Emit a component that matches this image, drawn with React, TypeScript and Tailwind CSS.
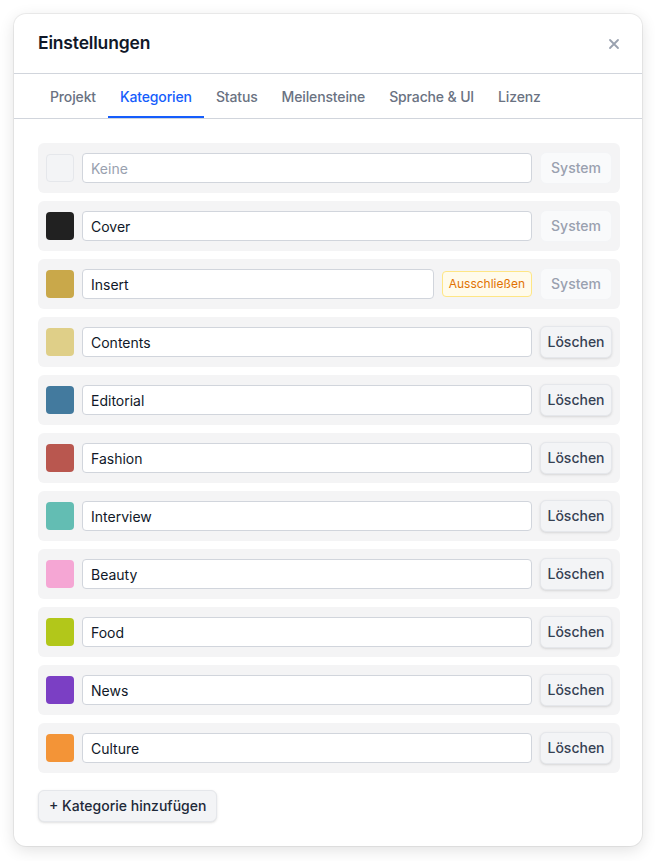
const CATEGORIES = [
  { name: "Keine", color: "", placeholder: true, system: true },
  { name: "Cover", color: "#212121", system: true },
  { name: "Insert", color: "#c9a84a", system: true, exclude: true },
  { name: "Contents", color: "#dfcf88" },
  { name: "Editorial", color: "#437a9e" },
  { name: "Fashion", color: "#b9574f" },
  { name: "Interview", color: "#63bdb3" },
  { name: "Beauty", color: "#f5a6d4" },
  { name: "Food", color: "#b2c71a" },
  { name: "News", color: "#7b3fc4" },
  { name: "Culture", color: "#f39437" },
];

const TABS = ["Projekt", "Kategorien", "Status", "Meilensteine", "Sprache & UI", "Lizenz"];

export default function App() {
  return (
    <div
      className="min-h-[861px] bg-white pl-[14px] pt-[14px] text-gray-900"
      style={{ fontFamily: "Inter, 'Liberation Sans', sans-serif" }}
    >
      <div className="w-[628px] rounded-xl bg-white shadow-[0_0_0_1px_rgba(0,0,0,0.06),0_4px_16px_rgba(0,0,0,0.12)]">
        {/* Header */}
        <div className="flex h-[60px] items-center justify-between border-b border-gray-300 pl-6 pr-[22px]">
          <h2 className="text-[17.5px] font-semibold tracking-[-0.01em]">Einstellungen</h2>
          <button className="text-gray-400">
            <svg width="12" height="12" viewBox="0 0 12 12" stroke="currentColor" strokeWidth="1.8" strokeLinecap="round">
              <path d="M2 2l8 8M10 2l-8 8" />
            </svg>
          </button>
        </div>

        {/* Tabs */}
        <div className="flex border-b border-gray-300 px-6">
          {TABS.map((tab) => {
            const active = tab === "Kategorien";
            return (
              <div
                key={tab}
                className={
                  active
                    ? "border-b-2 border-blue-600 px-3 pb-[9px] pt-[13px] text-sm font-medium tracking-[-0.01em] text-blue-600"
                    : "border-b-2 border-transparent px-3 pb-[9px] pt-[13px] text-sm font-medium tracking-[-0.01em] text-gray-500"
                }
              >
                {tab}
              </div>
            );
          })}
        </div>

        {/* Content */}
        <div className="pb-6 pl-6 pr-[22px] pt-6">
          <div className="flex flex-col gap-2">
            {CATEGORIES.map((c) => (
              <div key={c.name} className="flex h-[50px] items-center gap-2 rounded-md bg-[#f4f4f5] px-2">
                {c.placeholder ? (
                  <div className="h-7 w-7 shrink-0 rounded border border-gray-200 bg-gray-100" />
                ) : (
                  <div className="h-7 w-7 shrink-0 rounded" style={{ backgroundColor: c.color }} />
                )}
                <input
                  readOnly
                  value={c.placeholder ? "" : c.name}
                  placeholder={c.placeholder ? c.name : ""}
                  className="h-[30px] min-w-0 flex-1 rounded border border-gray-300 bg-white px-2 text-sm text-gray-900 placeholder:text-gray-400 outline-none"
                />
                {c.exclude && (
                  <span className="flex h-[26px] items-center rounded border border-amber-200 bg-amber-50 px-[6px] text-xs text-amber-600">
                    Ausschließen
                  </span>
                )}
                {c.system ? (
                  <button className="h-8 w-[72px] shrink-0 rounded-md border border-gray-100 bg-gray-50 text-sm font-medium text-gray-400">
                    System
                  </button>
                ) : (
                  <button className="h-8 w-[72px] shrink-0 rounded-md border border-gray-200 bg-gray-100 text-sm font-medium text-gray-700 shadow-sm">
                    Löschen
                  </button>
                )}
              </div>
            ))}
          </div>

          <button className="mt-[17px] h-8 rounded-md border border-gray-200 bg-gray-100 px-[10px] text-sm font-medium text-gray-800 shadow-sm">
            + Kategorie hinzufügen
          </button>
        </div>
      </div>
    </div>
  );
}
